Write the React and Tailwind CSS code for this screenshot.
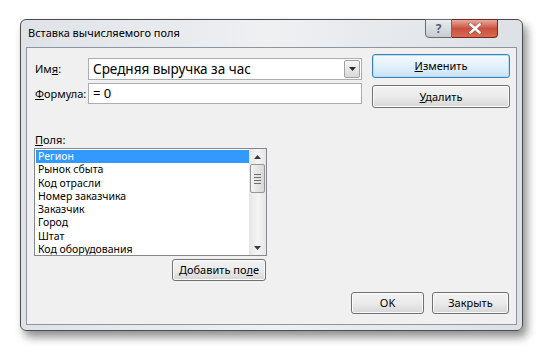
import React from 'react'

const fields = [
  'Регион',
  'Рынок сбыта',
  'Код отрасли',
  'Номер заказчика',
  'Заказчик',
  'Город',
  'Штат',
  'Код оборудования',
]

const Btn = ({ children, className = '', primary = false }) => (
  <div
    className={
      'flex items-center justify-center rounded-[3px] border text-[11px] leading-[14px] text-black ' +
      (primary
        ? 'border-[#3c7fb1] bg-gradient-to-b from-[#f4fafe] via-[#e3f1fb] to-[#c9e3f5] shadow-[inset_0_0_0_1px_#b6e0f7] '
        : 'border-[#707070] bg-gradient-to-b from-[#f2f2f2] via-[#ebebeb] to-[#d6d6d6] shadow-[inset_0_0_0_1px_#fcfcfc] ') +
      className
    }
  >
    {children}
  </div>
)

export default function App() {
  return (
    <div
      className="w-[543px] h-[353px] bg-white pt-[19px] pl-[20px]"
      style={{ fontFamily: '"Noto Sans", "Open Sans", sans-serif' }}
    >
      {/* окно */}
      <div className="w-[503px] h-[312px] flex flex-col rounded-[6px] border border-[#4d4d4d] bg-gradient-to-r from-[#dfe3e8] via-[#eef0f2] to-[#dde1e6] shadow-[4px_6px_10px_rgba(0,0,0,0.45)]">
        {/* заголовок */}
        <div className="h-[27px] flex items-start justify-between">
          <div className="pl-[7px] pt-[5px] text-[11px] leading-[16px] text-black">Вставка вычисляемого поля</div>
          <div className="flex mr-[24px] -mt-px">
            <div className="w-[27px] h-[19px] flex items-center justify-center rounded-bl-[4px] border border-[#6b6b6b] bg-gradient-to-b from-[#e8ecf0] to-[#c6ccd3] text-[12px] font-bold text-[#5b6068]">
              ?
            </div>
            <div className="w-[46px] h-[19px] flex items-center justify-center rounded-br-[4px] border border-l-0 border-[#6b2a24] bg-gradient-to-b from-[#e6a99c] via-[#c9503d] to-[#d96b50]">
              <svg width="14" height="11" viewBox="0 0 14 11">
                <path d="M2 1 L12 10 M12 1 L2 10" stroke="#3a2a2a" strokeWidth="3.6" strokeLinecap="square" opacity="0.35" />
                <path d="M2.5 1.5 L11.5 9.5 M11.5 1.5 L2.5 9.5" stroke="#ffffff" strokeWidth="2.6" strokeLinecap="square" />
              </svg>
            </div>
          </div>
        </div>

        {/* внутренняя панель */}
        <div className="flex-1 mx-[5px] mb-[5px] border border-[#8e959c] bg-[#f0f0f0] flex flex-col">
          <div className="flex pt-[6px] pl-[7px]">
            <div className="flex flex-col gap-[3px] pt-[4px] w-[328px]">
              <div className="flex items-center h-[22px]">
                <div className="w-[54px] pl-[1px] text-[11px] leading-[14px]">
                  Им<span className="underline">я</span>:
                </div>
                <div className="flex-1 h-[22px] flex items-center border border-[#abadb3] bg-white">
                  <div className="flex-1 pl-[4px] text-[13.5px] leading-[18px]">Средняя выручка за час</div>
                  <div className="w-[16px] h-[18px] mr-px flex items-center justify-center rounded-[2px] border border-[#a0a4aa] bg-gradient-to-b from-[#f6f6f6] to-[#d8d8d8]">
                    <svg width="7" height="4" viewBox="0 0 7 4">
                      <path d="M0 0 H7 L3.5 4 Z" fill="#2b2b2b" />
                    </svg>
                  </div>
                </div>
              </div>
              <div className="flex items-center h-[21px]">
                <div className="w-[54px] pl-[1px] text-[11px] leading-[14px] whitespace-nowrap">
                  <span className="underline">Ф</span>ормула:
                </div>
                <div className="flex-1 h-[21px] flex items-center border border-[#abadb3] bg-white pl-[4px] text-[13px] leading-[17px]">
                  = 0
                </div>
              </div>
            </div>
            <div className="flex flex-col gap-[7px] ml-[10px]">
              <Btn primary className="w-[138px] h-[24px]">
                <span><span className="underline">И</span>зменить</span>
              </Btn>
              <Btn className="w-[138px] h-[23px]">
                <span><span className="underline">У</span>далить</span>
              </Btn>
            </div>
          </div>

          <div className="pl-[8px] pt-[24px] text-[11px] leading-[15px]">
            <span className="underline">П</span>оля:
          </div>
          <div className="ml-[7px] mt-[1px] w-[233px] h-[108px] flex border border-[#828790] bg-white">
            <div className="flex-1 pt-px pl-px overflow-hidden">
              {fields.map((f, i) => (
                <div
                  key={f}
                  className={
                    'h-[13.25px] pl-[2px] text-[10.5px] leading-[13px] whitespace-nowrap ' +
                    (i === 0 ? 'bg-[#3399ff] text-white' : 'text-black')
                  }
                >
                  {f}
                </div>
              ))}
            </div>
            <div className="w-[17px] flex flex-col bg-gradient-to-r from-[#e6e6e6] via-[#f4f4f4] to-[#e6e6e6]">
              <div className="h-[15px] flex items-center justify-center">
                <svg width="7" height="4" viewBox="0 0 7 4">
                  <path d="M0 4 H7 L3.5 0 Z" fill="#3a3a3a" />
                </svg>
              </div>
              <div className="mx-px h-[29px] flex flex-col items-center justify-center gap-[2px] rounded-[2px] border border-[#969696] bg-gradient-to-r from-[#f2f2f2] to-[#d8d8d8]">
                <div className="w-[7px] h-px bg-[#6e6e6e]" />
                <div className="w-[7px] h-px bg-[#6e6e6e]" />
                <div className="w-[7px] h-px bg-[#6e6e6e]" />
                <div className="w-[7px] h-px bg-[#6e6e6e]" />
              </div>
              <div className="flex-1" />
              <div className="h-[15px] flex items-center justify-center">
                <svg width="7" height="4" viewBox="0 0 7 4">
                  <path d="M0 0 H7 L3.5 4 Z" fill="#3a3a3a" />
                </svg>
              </div>
            </div>
          </div>
          <div className="w-[239px] flex justify-end mt-[3px]">
            <Btn className="w-[94px] h-[22px]">
              <span>Добавить по<span className="underline">л</span>е</span>
            </Btn>
          </div>

          <div className="flex-1" />
          <div className="flex justify-end gap-[8px] pr-[7px] pb-[10px]">
            <Btn className="w-[73px] h-[22px]">OK</Btn>
            <Btn className="w-[77px] h-[22px]">Закрыть</Btn>
          </div>
        </div>
      </div>
    </div>
  )
}
